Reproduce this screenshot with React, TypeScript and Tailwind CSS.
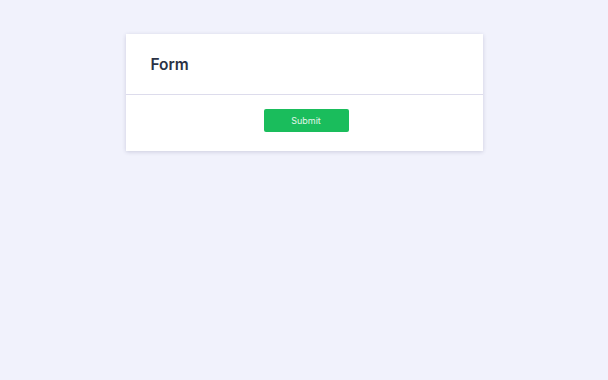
export default function App() {
  return (
    <div className="min-h-[380px] w-full bg-[#f1f2fc] pt-[34px] font-['Inter',sans-serif]">
      <div className="mx-auto w-[357px] bg-white shadow-[0_1px_4px_rgba(40,40,90,0.18)]">
        <div className="flex h-[60px] items-center px-[25px] pt-[2px]">
          <h1 className="text-[15.5px] font-semibold text-[#2b3245]">Form</h1>
        </div>
        <div className="flex justify-center border-t border-[#dddcec] pt-[14px] pb-[19px]">
          <button className="ml-[4px] h-[23px] w-[85px] rounded-[2px] bg-[#1abd5c] text-[9px] text-[#e3f6ea]">
            Submit
          </button>
        </div>
      </div>
    </div>
  );
}
